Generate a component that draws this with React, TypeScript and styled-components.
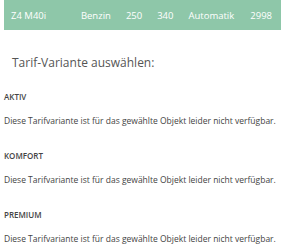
import styled, { createGlobalStyle } from "styled-components";

const GlobalStyle = createGlobalStyle`
  body {
    margin: 0;
    background: #ffffff;
    font-family: "Open Sans", "Noto Sans", sans-serif;
  }
`;

const Page = styled.div`
  width: 286px;
  height: 250px;
  overflow: hidden;
`;

const Bar = styled.div`
  display: flex;
  align-items: center;
  height: 30px;
  margin: 0 5px 0 4px;
  padding: 0 9px 0 7px;
  background: #8ec7a9;
  color: #ffffff;
  font-size: 9.5px;
`;

const Model = styled.span`
  flex: 1;
`;

const Spec = styled.span`
  margin-left: ${(p: { $gap: number }) => p.$gap}px;
`;

const Title = styled.h2`
  margin: 23px 0 0 12px;
  font-size: 12px;
  font-weight: 400;
  color: #555555;
  line-height: 20px;
`;

const List = styled.div`
  margin-top: 18px;
`;

const Section = styled.div`
  padding: 0 4px;
  margin-top: 23px;
  &:first-of-type {
    margin-top: 0;
  }
`;

const Label = styled.div`
  font-size: 8px;
  font-weight: 600;
  color: #444444;
  line-height: 12px;
`;

const Note = styled.div`
  margin-top: 12px;
  font-size: 8.5px;
  color: #444444;
  line-height: 12px;
  white-space: nowrap;
`;

const tariffs = ["AKTIV", "KOMFORT", "PREMIUM"];

export default function App() {
  return (
    <Page>
      <GlobalStyle />
      <Bar>
        <Model>Z4 M40i</Model>
        <Spec $gap={0}>Benzin</Spec>
        <Spec $gap={15}>250</Spec>
        <Spec $gap={15}>340</Spec>
        <Spec $gap={15}>Automatik</Spec>
        <Spec $gap={16}>2998</Spec>
      </Bar>
      <Title>Tarif-Variante auswählen:</Title>
      <List>
        {tariffs.map((t) => (
          <Section key={t}>
            <Label>{t}</Label>
            <Note>Diese Tarifvariante ist für das gewählte Objekt leider nicht verfügbar.</Note>
          </Section>
        ))}
      </List>
    </Page>
  );
}
